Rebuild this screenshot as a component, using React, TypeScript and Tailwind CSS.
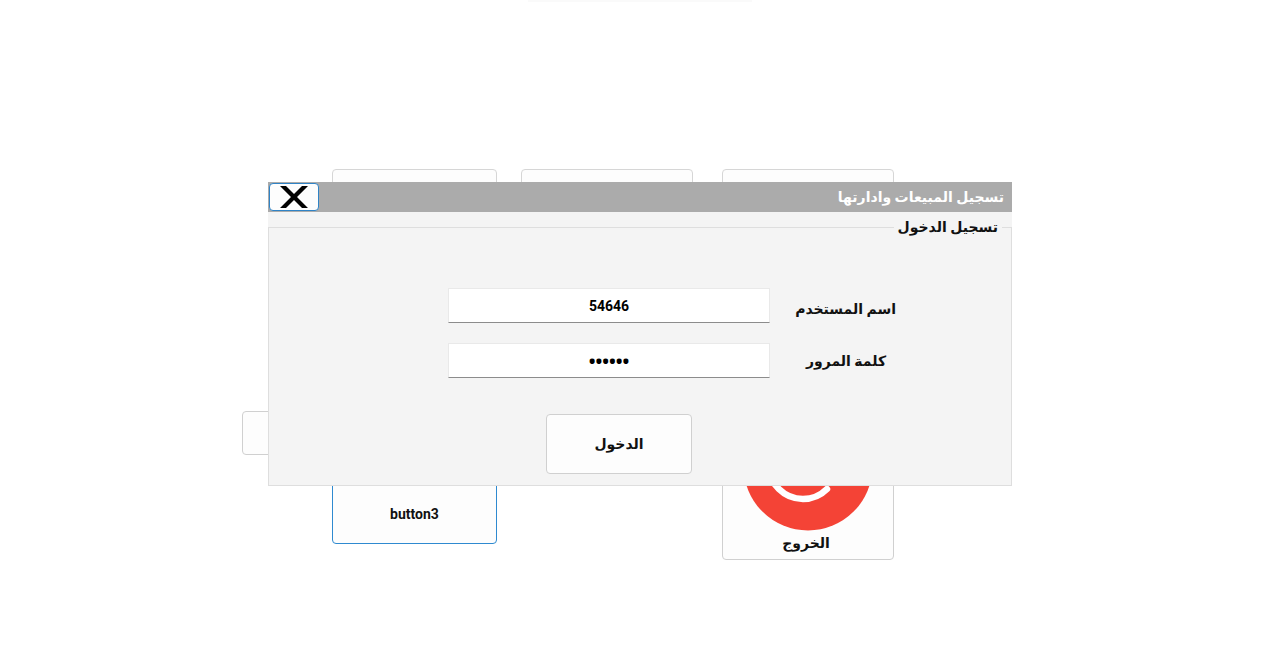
import type { ReactNode } from 'react';

type TileProps = { className: string; label: string; children?: ReactNode };

function Tile({ className, label, children }: TileProps) {
  return (
    <button
      type="button"
      aria-label={label}
      className={`rounded border bg-[#fdfdfd] text-sm font-bold text-[#111] ${className}`}
    >
      {children}
    </button>
  );
}

function ExitIcon() {
  return (
    <svg viewBox="0 0 130 130" className="size-[130px]" aria-hidden="true">
      <circle cx="65" cy="65" r="64.500" fill="#f44336" />
      <path
        d="M84 88A34 34 0 1 1 84 40M58 64H104M92 51L105 64L92 77"
        fill="none"
        stroke="#fff"
        strokeWidth="6.500"
        strokeLinecap="round"
        strokeLinejoin="round"
      />
    </svg>
  );
}

const field =
  'h-[35px] w-full border border-[#e9e9e9] border-b-[#8c8c8c] bg-white text-center font-bold text-black outline-none';

export default function App() {
  return (
    <div className="relative min-h-screen overflow-hidden bg-white font-[Roboto,'Open_Sans','DejaVu_Sans',sans-serif]">
      <div className="mx-auto h-0.5 w-56 bg-[#fafafa]" />

      <main className="mx-auto flex w-[796px] max-w-full pt-[167px]">
        <div className="w-[90px] shrink-0 pt-[242px]">
          <Tile label="button4" className="h-11 w-20 border-[#d0d0d0]" />
        </div>
        <div className="flex h-[375px] w-[165px] shrink-0 flex-col justify-between">
          <Tile label="button1" className="h-40 border-[#d6d6d6]" />
          <Tile label="button3" className="h-16 border-[#2f8ad0] pt-1">
            button3
          </Tile>
        </div>
        <div className="ml-6 w-[172px] shrink-0">
          <Tile label="button2" className="h-40 w-full border-[#d6d6d6]" />
        </div>
        <div className="ml-[29px] flex h-[391px] w-[172px] shrink-0 flex-col justify-between">
          <Tile label="button5" className="h-40 border-[#d6d6d6]" />
          <Tile label="الخروج" className="flex h-[168px] flex-col items-center justify-end border-[#d0d0d0] pb-1.5">
            <ExitIcon />
            <span className="mt-0.5 pr-1">الخروج</span>
          </Tile>
        </div>
      </main>

      <div className="absolute inset-x-0 top-[182px] flex justify-center">
        <section
          role="dialog"
          aria-labelledby="title"
          className="flex w-[744px] max-w-full flex-col bg-[#f4f4f4]"
        >
          <header className="flex h-[30px] items-center justify-between bg-[#ababab] pr-2">
            <button
              type="button"
              aria-label="إغلاق"
              className="ml-px flex h-7 w-[50px] items-center justify-center rounded border border-[#2f83c6] bg-[#fdfdfd]"
            >
              <svg viewBox="0 0 28 24" className="h-6 w-7" aria-hidden="true">
                <path d="M0 1H6L14 9L22 1H28L17 12L28 23H22L14 15L6 23H0L11 12Z" fill="#000" />
              </svg>
            </button>
            <h1 id="title" dir="rtl" className="text-sm font-bold text-white">
              تسجيل المبيعات وادارتها
            </h1>
          </header>

          <form dir="rtl" className="pt-1" onSubmit={(e) => e.preventDefault()}>
            <fieldset className="border border-[#dedede] pr-[115px] pb-[11px] pl-[179px]">
              <legend className="-mr-[106px] px-1 text-sm leading-[22px] font-bold text-[#111]">
                تسجيل الدخول
              </legend>
              <div className="grid grid-cols-[100px_1fr] items-center gap-x-[26px] gap-y-5 pt-[50px] text-center text-sm font-bold text-[#111]">
                <label htmlFor="user" className="whitespace-nowrap pt-1.5">
                  اسم المستخدم
                </label>
                <input id="user" type="text" defaultValue="54646" className={field} />
                <label htmlFor="password" className="whitespace-nowrap">
                  كلمة المرور
                </label>
                <input
                  id="password"
                  type="password"
                  defaultValue="546461"
                  className={`text-lg font-['Open_Sans',sans-serif] ${field}`}
                />
              </div>
              <div className="mt-9 flex justify-end pl-[98px]">
                <button
                  type="submit"
                  className="h-[60px] w-[146px] rounded border border-[#d0d0d0] bg-[#fdfdfd] text-sm font-bold text-[#111]"
                >
                  الدخول
                </button>
              </div>
            </fieldset>
          </form>
        </section>
      </div>
    </div>
  );
}
